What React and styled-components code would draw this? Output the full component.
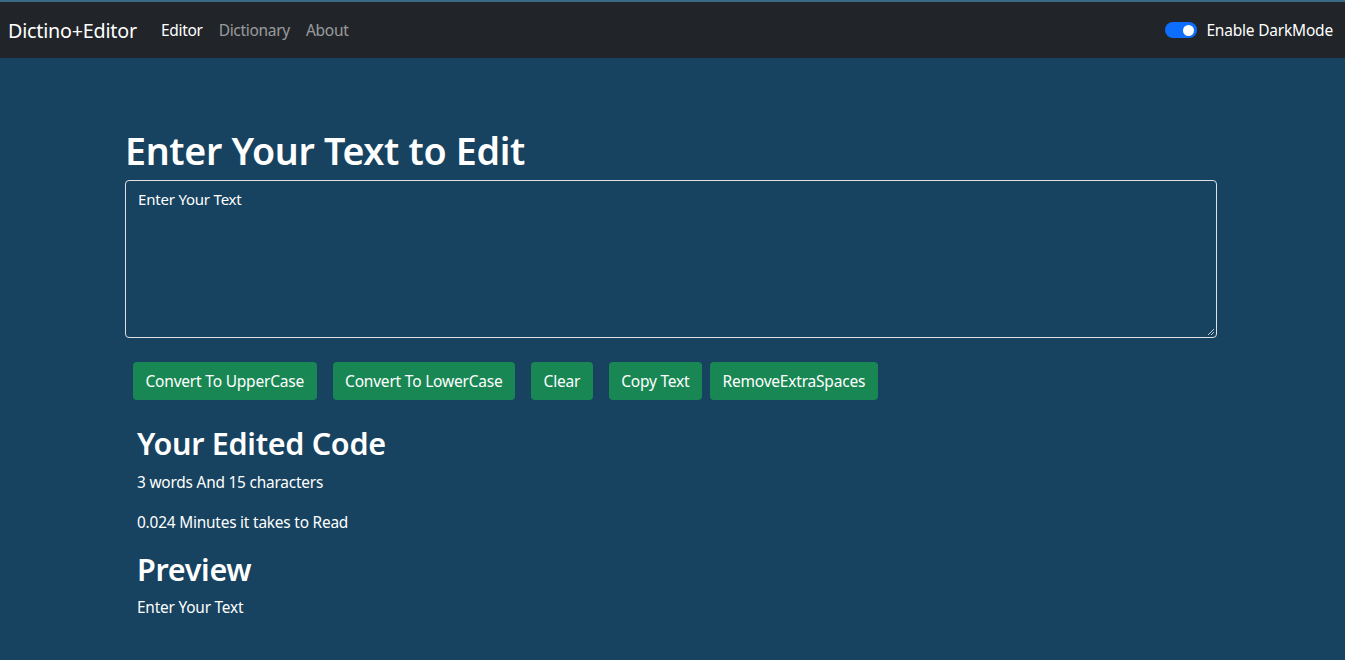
import React from "react";
import styled, { createGlobalStyle } from "styled-components";

const GlobalStyle = createGlobalStyle`
  html, body {
    margin: 0;
    padding: 0;
    background: #174360;
    font-family: "Noto Sans", "Open Sans", sans-serif;
    color: #fff;
  }
  * { box-sizing: border-box; }
`;

const Page = styled.div`
  min-height: 660px;
  display: flex;
  flex-direction: column;
  background: #174360;
`;

const TopStrip = styled.div`
  height: 2px;
  background: #3b6a86;
`;

const Navbar = styled.nav`
  height: 56px;
  background: #212529;
  display: flex;
  align-items: center;
  padding: 0 12px 0 8px;
`;

const Brand = styled.span`
  font-size: 19.7px;
  color: #fff;
  margin-right: 16px;
  letter-spacing: -0.2px;
`;

const NavLink = styled.a`
  font-size: 15.5px;
  color: ${(p) => (p.$active ? "#fff" : "rgba(255,255,255,0.55)")};
  padding: 0 8px;
  text-decoration: none;
  letter-spacing: -0.3px;
`;

const NavRight = styled.div`
  margin-left: auto;
  display: flex;
  align-items: center;
  gap: 9px;
  font-size: 15.5px;
  letter-spacing: -0.2px;
`;

const Switch = styled.span`
  width: 32px;
  height: 16px;
  border-radius: 8px;
  background: #0d6efd;
  display: flex;
  align-items: center;
  justify-content: flex-end;
  padding-right: 3px;
  &::after {
    content: "";
    width: 11px;
    height: 11px;
    border-radius: 50%;
    background: #fff;
  }
`;

const Main = styled.main`
  width: 1092px;
  margin: 0 0 0 125px;
  padding-top: 70px;
`;

const Title = styled.h1`
  font-size: 37.6px;
  font-weight: 600;
  margin: 0 0 7px 0;
  line-height: 1.2;
  letter-spacing: -0.3px;
`;

const TextArea = styled.div`
  height: 158px;
  border: 1px solid #dee2e6;
  border-radius: 4px;
  padding: 8px 12px;
  font-size: 15px;
  letter-spacing: -0.2px;
  position: relative;
`;

const Grip = styled.svg`
  position: absolute;
  right: 1px;
  bottom: 1px;
`;

const ButtonRow = styled.div`
  display: flex;
  margin: 24px 0 0 8px;
`;

const Button = styled.button`
  height: 38px;
  padding: 0 12.5px;
  background: #198754;
  color: #fff;
  border: none;
  border-radius: 4px;
  font-family: inherit;
  font-size: 15.5px;
  letter-spacing: -0.2px;
  margin-right: ${(p) => p.$gap}px;
`;

const Section = styled.section`
  padding-left: 12px;
`;

const SubTitle = styled.h2`
  font-size: 30.5px;
  font-weight: 600;
  line-height: 1.2;
  margin: ${(p) => p.$top}px 0 9px 0;
  letter-spacing: -0.3px;
`;

const Para = styled.p`
  font-size: 15.4px;
  margin: 0 0 16px 0;
  line-height: 24px;
  letter-spacing: -0.2px;
`;

export default function App() {
  return (
    <Page>
      <GlobalStyle />
      <TopStrip />
      <Navbar>
        <Brand>Dictino+Editor</Brand>
        <NavLink $active>Editor</NavLink>
        <NavLink>Dictionary</NavLink>
        <NavLink>About</NavLink>
        <NavRight>
          <Switch />
          <span>Enable DarkMode</span>
        </NavRight>
      </Navbar>
      <Main>
        <Title>Enter Your Text to Edit</Title>
        <TextArea>
          Enter Your Text
          <Grip width="10" height="10" viewBox="0 0 10 10">
            <path d="M9 3 L3 9 M9 6 L6 9" stroke="#ccc" strokeWidth="1" />
          </Grip>
        </TextArea>
        <ButtonRow>
          <Button $gap={16}>Convert To UpperCase</Button>
          <Button $gap={16}>Convert To LowerCase</Button>
          <Button $gap={16}>Clear</Button>
          <Button $gap={8}>Copy Text</Button>
          <Button $gap={0}>RemoveExtraSpaces</Button>
        </ButtonRow>
        <Section>
          <SubTitle $top={25}>Your Edited Code</SubTitle>
          <Para>3 words And 15 characters</Para>
          <Para>0.024 Minutes it takes to Read</Para>
          <SubTitle $top={15}>Preview</SubTitle>
          <Para>Enter Your Text</Para>
        </Section>
      </Main>
    </Page>
  );
}
